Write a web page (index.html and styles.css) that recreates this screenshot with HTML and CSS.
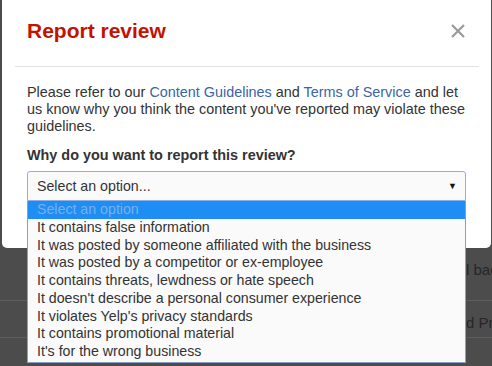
FILE: index.html
```html
<!DOCTYPE html>
<html lang="en">
<head>
  <meta charset="UTF-8">
  <title>Report review</title>
  <link rel="stylesheet" href="styles.css">
</head>
<body>

  <!-- modal -->
  <div class="modal">
    <div class="modal-header">
      <h2 class="modal-title">Report review</h2>
      <span class="close-btn">
        <svg width="14" height="14" viewBox="0 0 14 14"><path d="M1 1 L13 13 M13 1 L1 13" stroke="#9a9a9a" stroke-width="2.2"/></svg>
      </span>
    </div>
    <div class="modal-body">
      <p class="intro">
        Please refer to our <a href="#">Content Guidelines</a> and <a href="#">Terms of Service</a> and let
        us know why you think the content you've reported may violate these guidelines.
      </p>
      <label class="field-label">Why do you want to report this review?</label>
      <div class="select-wrap">
        <div class="select-box">
          <span>Select an option...</span>
          <span class="arrow">&#9660;</span>
        </div>
        <ul class="option-list">
          <li class="option selected">Select an option</li>
          <li class="option">It contains false information</li>
          <li class="option">It was posted by someone affiliated with the business</li>
          <li class="option">It was posted by a competitor or ex-employee</li>
          <li class="option">It contains threats, lewdness or hate speech</li>
          <li class="option">It doesn't describe a personal consumer experience</li>
          <li class="option">It violates Yelp's privacy standards</li>
          <li class="option">It contains promotional material</li>
          <li class="option">It's for the wrong business</li>
        </ul>
      </div>
    </div>
  </div>

  <!-- page behind the overlay -->
  <div class="behind">
    <div class="behind-row">l back</div>
    <div class="behind-row">d Privacy</div>
  </div>

</body>
</html>
```

FILE: styles.css
```css
/* page + overlay */
body {
  margin: 0;
  min-height: 366px;
  background: #4c4c4c;
  font-family: "Liberation Sans", Arial, sans-serif;
  color: #333;
}

/* modal */
.modal {
  margin: 0 1px 0 2px;
  height: 248px;
  background: #fff;
  border-radius: 0 0 5px 5px;
}
.modal-header {
  display: flex;
  justify-content: space-between;
  align-items: flex-start;
  margin: 0 12px 0 13px;
  padding: 19px 14px 23px 12px;
  border-bottom: 1px solid #e3e3e3;
}
.modal-title {
  margin: 0;
  font-size: 21px;
  line-height: 24px;
  font-weight: bold;
  color: #c41200;
}
.close-btn {
  display: block;
  margin-top: 5px;
  line-height: 0;
}
.modal-body {
  padding: 17px 25px 0;
}
.intro {
  margin: 0;
  font-size: 14.4px;
  line-height: 17px;
  color: #333;
}
.intro a {
  color: #3b65a7;
  text-decoration: none;
}
.field-label {
  display: block;
  margin-top: 12px;
  font-size: 14.4px;
  line-height: 17px;
  font-weight: bold;
  color: #333;
}

/* select + open list */
.select-wrap {
  position: relative;
  margin-top: 7px;
}
.select-box {
  display: flex;
  justify-content: space-between;
  align-items: center;
  height: 28px;
  padding: 0 8px 0 9px;
  border: 1px solid #8eaee6;
  border-radius: 3px 3px 0 0;
  background: #fafafa;
  font-size: 14.2px;
  color: #333;
}
.arrow {
  font-size: 9px;
  color: #111;
}
.option-list {
  position: absolute;
  top: 100%;
  left: 0;
  right: 0;
  margin: 0;
  padding: 0 0 1px;
  list-style: none;
  background: #fafafa;
  border: 1px solid #8a9fc2;
  border-top: none;
}
.option {
  padding-left: 9px;
  font-size: 14.2px;
  line-height: 17.75px;
  color: #333;
  white-space: nowrap;
}
.option.selected {
  background: #1e8ef5;
  color: #7aaee8;
}

/* faded page content */
.behind {
  padding-top: 11px;
}
.behind-row {
  padding: 0 0 19px 466px;
  border-bottom: 1px solid #5e5e5e;
  font-size: 15px;
  line-height: 22px;
  color: #262626;
  white-space: nowrap;
  overflow: hidden;
}
.behind-row + .behind-row {
  padding-top: 11px;
  padding-bottom: 3px;
}
```
